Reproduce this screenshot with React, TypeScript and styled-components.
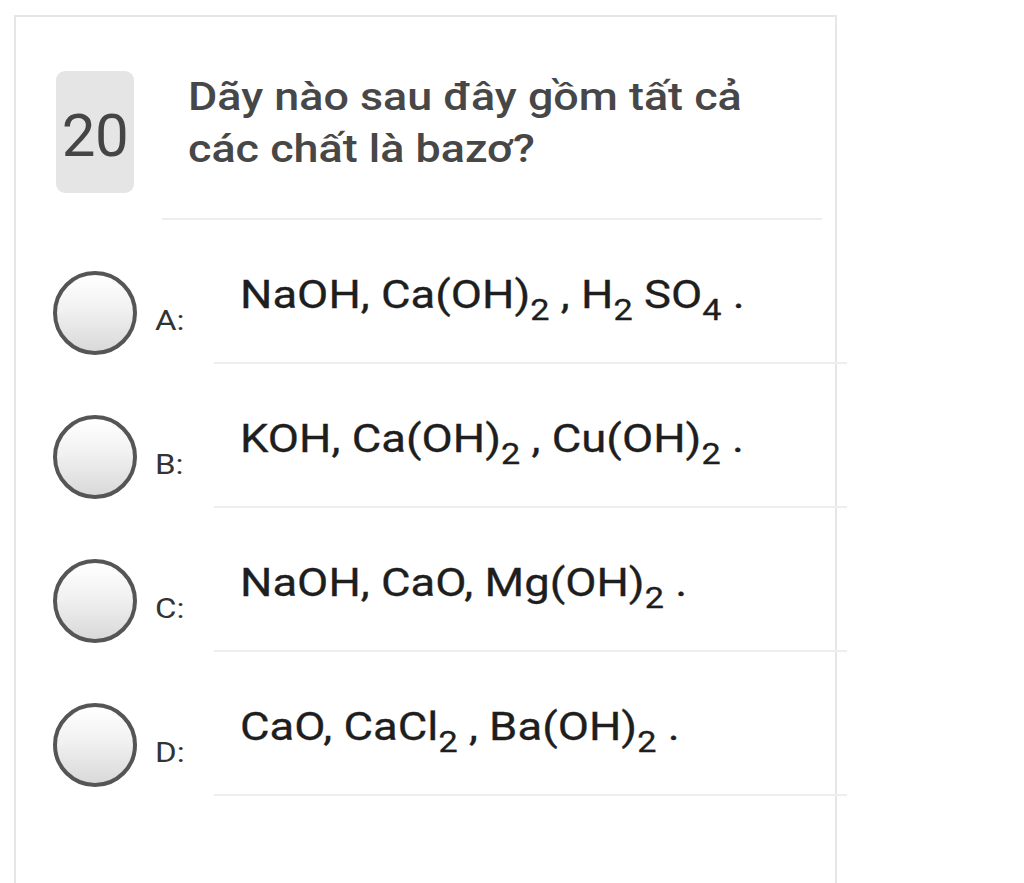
import React from "react";
import styled, { createGlobalStyle } from "styled-components";

const GlobalStyle = createGlobalStyle`
  html, body {
    margin: 0;
    padding: 0;
    background: #ffffff;
    font-family: Roboto, "Noto Sans", "Liberation Sans", sans-serif;
    overflow: hidden;
  }
  * { box-sizing: border-box; }
`;

const Card = styled.div`
  margin: 15px 0 0 14px;
  width: 823px;
  min-height: calc(100vh - 15px);
  border: 2px solid #e6e6e6;
  border-bottom: none;
  background: #fff;
`;

const Header = styled.div`
  display: flex;
  align-items: flex-start;
  padding: 54px 0 0 40px;
`;

const Badge = styled.div`
  width: 78px;
  height: 122px;
  border-radius: 9px;
  background: #e5e5e5;
  color: #454545;
  font-size: 60px;
  display: flex;
  align-items: center;
  justify-content: center;
  padding-top: 6px;
  letter-spacing: -0.5px;
`;

const Wide = styled.span<{ $sx: number }>`
  display: inline-block;
  transform: scaleX(${(p) => p.$sx});
  transform-origin: left center;
`;

const Question = styled.div`
  margin-left: 54px;
  width: 510px;
  font-size: 38.5px;
  line-height: 52px;
  color: #474747;
  font-weight: 500;
`;

const Divider = styled.div`
  height: 2px;
  background: #eeeeee;
  margin: 25px 13px 0 146px;
`;

const Row = styled.div`
  display: flex;
  height: 144px;
`;

const LeftCell = styled.div`
  width: 198px;
  display: flex;
  align-items: center;
  align-self: flex-start;
  padding: 51px 0 0 37px;
`;

const Radio = styled.span`
  width: 84px;
  height: 84px;
  border-radius: 50%;
  border: 4px solid #555555;
  background: linear-gradient(180deg, #ffffff 0%, #f1f1f1 45%, #d9d9d9 100%);
  flex-shrink: 0;
`;

const Label = styled.span`
  margin-left: 18px;
  padding-top: 15px;
  font-size: 28px;
  color: #333333;
`;

const ContentCell = styled.div`
  flex: 1;
  margin-right: -12px;
  border-bottom: 2px solid #eeeeee;
  padding: 52px 0 0 26px;
  font-size: 38.5px;
  font-weight: 400;
  line-height: 1.2;
  color: #1e1e1e;
  white-space: nowrap;
  -webkit-text-stroke: 0.3px #1e1e1e;
`;

const Sub = styled.sub`
  font-size: 29px;
  vertical-align: -12px;
  line-height: 0;
`;

type Option = { label: string; content: React.ReactNode };

const options: Option[] = [
  {
    label: "A:",
    content: (
      <>
        NaOH, Ca(OH)<Sub>2</Sub> , H<Sub>2</Sub> SO<Sub>4</Sub> .
      </>
    ),
  },
  {
    label: "B:",
    content: (
      <>
        KOH, Ca(OH)<Sub>2</Sub> , Cu(OH)<Sub>2</Sub> .
      </>
    ),
  },
  {
    label: "C:",
    content: (
      <>
        NaOH, CaO, Mg(OH)<Sub>2</Sub> .
      </>
    ),
  },
  {
    label: "D:",
    content: (
      <>
        CaO, CaCl<Sub>2</Sub> , Ba(OH)<Sub>2</Sub> .
      </>
    ),
  },
];

export default function App() {
  return (
    <>
      <GlobalStyle />
      <Card>
        <Header>
          <Badge>20</Badge>
          <Question>
            <Wide $sx={1.165}>Dãy nào sau đây gồm tất cả các chất là bazơ?</Wide>
          </Question>
        </Header>
        <Divider />
        {options.map((o) => (
          <Row key={o.label}>
            <LeftCell>
              <Radio />
              <Label>
                <Wide $sx={1.18}>{o.label}</Wide>
              </Label>
            </LeftCell>
            <ContentCell>
              <Wide $sx={1.18}>{o.content}</Wide>
            </ContentCell>
          </Row>
        ))}
      </Card>
    </>
  );
}
